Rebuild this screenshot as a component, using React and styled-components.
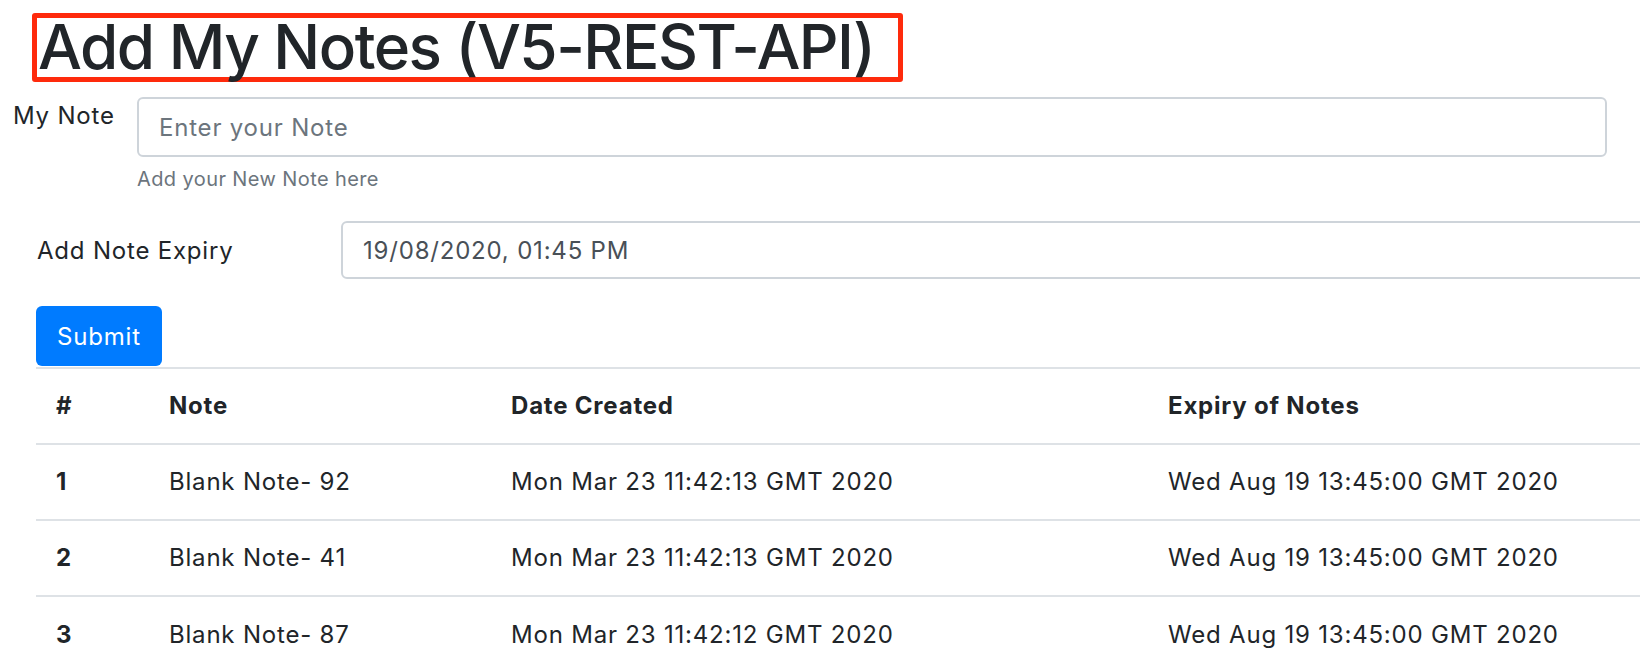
import styled, { createGlobalStyle } from 'styled-components';

const GlobalStyle = createGlobalStyle`
  html, body {
    margin: 0;
    padding: 0;
    background: #fff;
    overflow: hidden;
  }
  body {
    font-family: Inter, "Liberation Sans", Arial, sans-serif;
    color: #212529;
    font-size: 24px;
    letter-spacing: 0.8px;
    line-height: 1.5;
  }
`;

const notes = [
  { id: 1, note: 'Blank Note- 92', created: 'Mon Mar 23 11:42:13 GMT 2020', expiry: 'Wed Aug 19 13:45:00 GMT 2020' },
  { id: 2, note: 'Blank Note- 41', created: 'Mon Mar 23 11:42:13 GMT 2020', expiry: 'Wed Aug 19 13:45:00 GMT 2020' },
  { id: 3, note: 'Blank Note- 87', created: 'Mon Mar 23 11:42:12 GMT 2020', expiry: 'Wed Aug 19 13:45:00 GMT 2020' },
];

const App = () => {
  return (
    <Page>
      <GlobalStyle />
      <TitleBox>
        <Title>Add My Notes (V5-REST-API)</Title>
      </TitleBox>

      <FormRow>
        <Label $width="137px" $indent="13px">My Note</Label>
        <Field>
          <Input $width="1470px" placeholder="Enter your Note" />
          <Help>Add your New Note here</Help>
        </Field>
      </FormRow>

      <ExpiryRow>
        <Label $width="341px" $indent="37px">Add Note Expiry</Label>
        <Input $width="1340px" $height="58px" defaultValue="19/08/2020, 01:45 PM" />
      </ExpiryRow>

      <Submit type="button">Submit</Submit>

      <Tabla>
        <colgroup>
          <col style={{ width: 113 }} />
          <col style={{ width: 342 }} />
          <col style={{ width: 657 }} />
          <col style={{ width: 560 }} />
        </colgroup>
        <thead>
          <tr>
            <Th>#</Th>
            <Th>Note</Th>
            <Th>Date Created</Th>
            <Th>Expiry of Notes</Th>
          </tr>
        </thead>
        <tbody>
          {notes.map(n => (
            <tr key={n.id}>
              <Th>{n.id}</Th>
              <Td>{n.note}</Td>
              <Td>{n.created}</Td>
              <Td>{n.expiry}</Td>
            </tr>
          ))}
        </tbody>
      </Tabla>
    </Page>
  );
};

export default App;

const Page = styled.div`
  width: 1700px;
  padding-top: 13px;
`;

const TitleBox = styled.div`
  margin-left: 32px;
  width: 861px;
  height: 59px;
  border: 5px solid #fe2a0c;
  border-radius: 3px;
`;

const Title = styled.h1`
  margin: -2px 0 0 1px;
  font-size: 62px;
  font-weight: 500;
  line-height: 62px;
  letter-spacing: -1.5px;
  white-space: nowrap;
`;

const FormRow = styled.div`
  display: flex;
  align-items: flex-start;
  margin-top: 15px;
`;

const ExpiryRow = styled.div`
  display: flex;
  align-items: center;
  margin-top: 27px;
`;

const Label = styled.label`
  box-sizing: border-box;
  flex-shrink: 0;
  width: ${p => p.$width};
  padding-left: ${p => p.$indent};
  line-height: 37px;
  white-space: nowrap;
`;

const Field = styled.div`
  display: flex;
  flex-direction: column;
`;

const Input = styled.input`
  box-sizing: border-box;
  flex-shrink: 0;
  width: ${p => p.$width};
  height: ${p => p.$height || '60px'};
  padding: 0 20px;
  border: 2px solid #ced4da;
  border-radius: 6px;
  font-family: inherit;
  font-size: 24px;
  letter-spacing: 0.8px;
  color: #495057;
  background: #fff;
  outline: none;

  &::placeholder {
    color: #6c757d;
  }
`;

const Help = styled.small`
  margin-top: 7px;
  font-size: 20px;
  letter-spacing: 0.4px;
  line-height: 30px;
  color: #6c757d;
`;

const Submit = styled.button`
  display: block;
  margin: 27px 0 0 36px;
  width: 126px;
  height: 60px;
  border: none;
  border-radius: 6px;
  background: #007bff;
  color: #fff;
  font-family: inherit;
  font-size: 24px;
  letter-spacing: 0.8px;
  cursor: pointer;
`;

const Tabla = styled.table`
  margin: 1px 0 0 36px;
  width: 1672px;
  border-collapse: collapse;
  table-layout: fixed;
`;

const Cell = `
  box-sizing: border-box;
  height: 76px;
  padding: 0 20px;
  border-top: 2px solid #dee2e6;
  text-align: left;
  vertical-align: middle;
  white-space: nowrap;
`;

const Th = styled.th`
  ${Cell}
  font-weight: 700;
`;

const Td = styled.td`
  ${Cell}
  font-weight: 400;
`;
